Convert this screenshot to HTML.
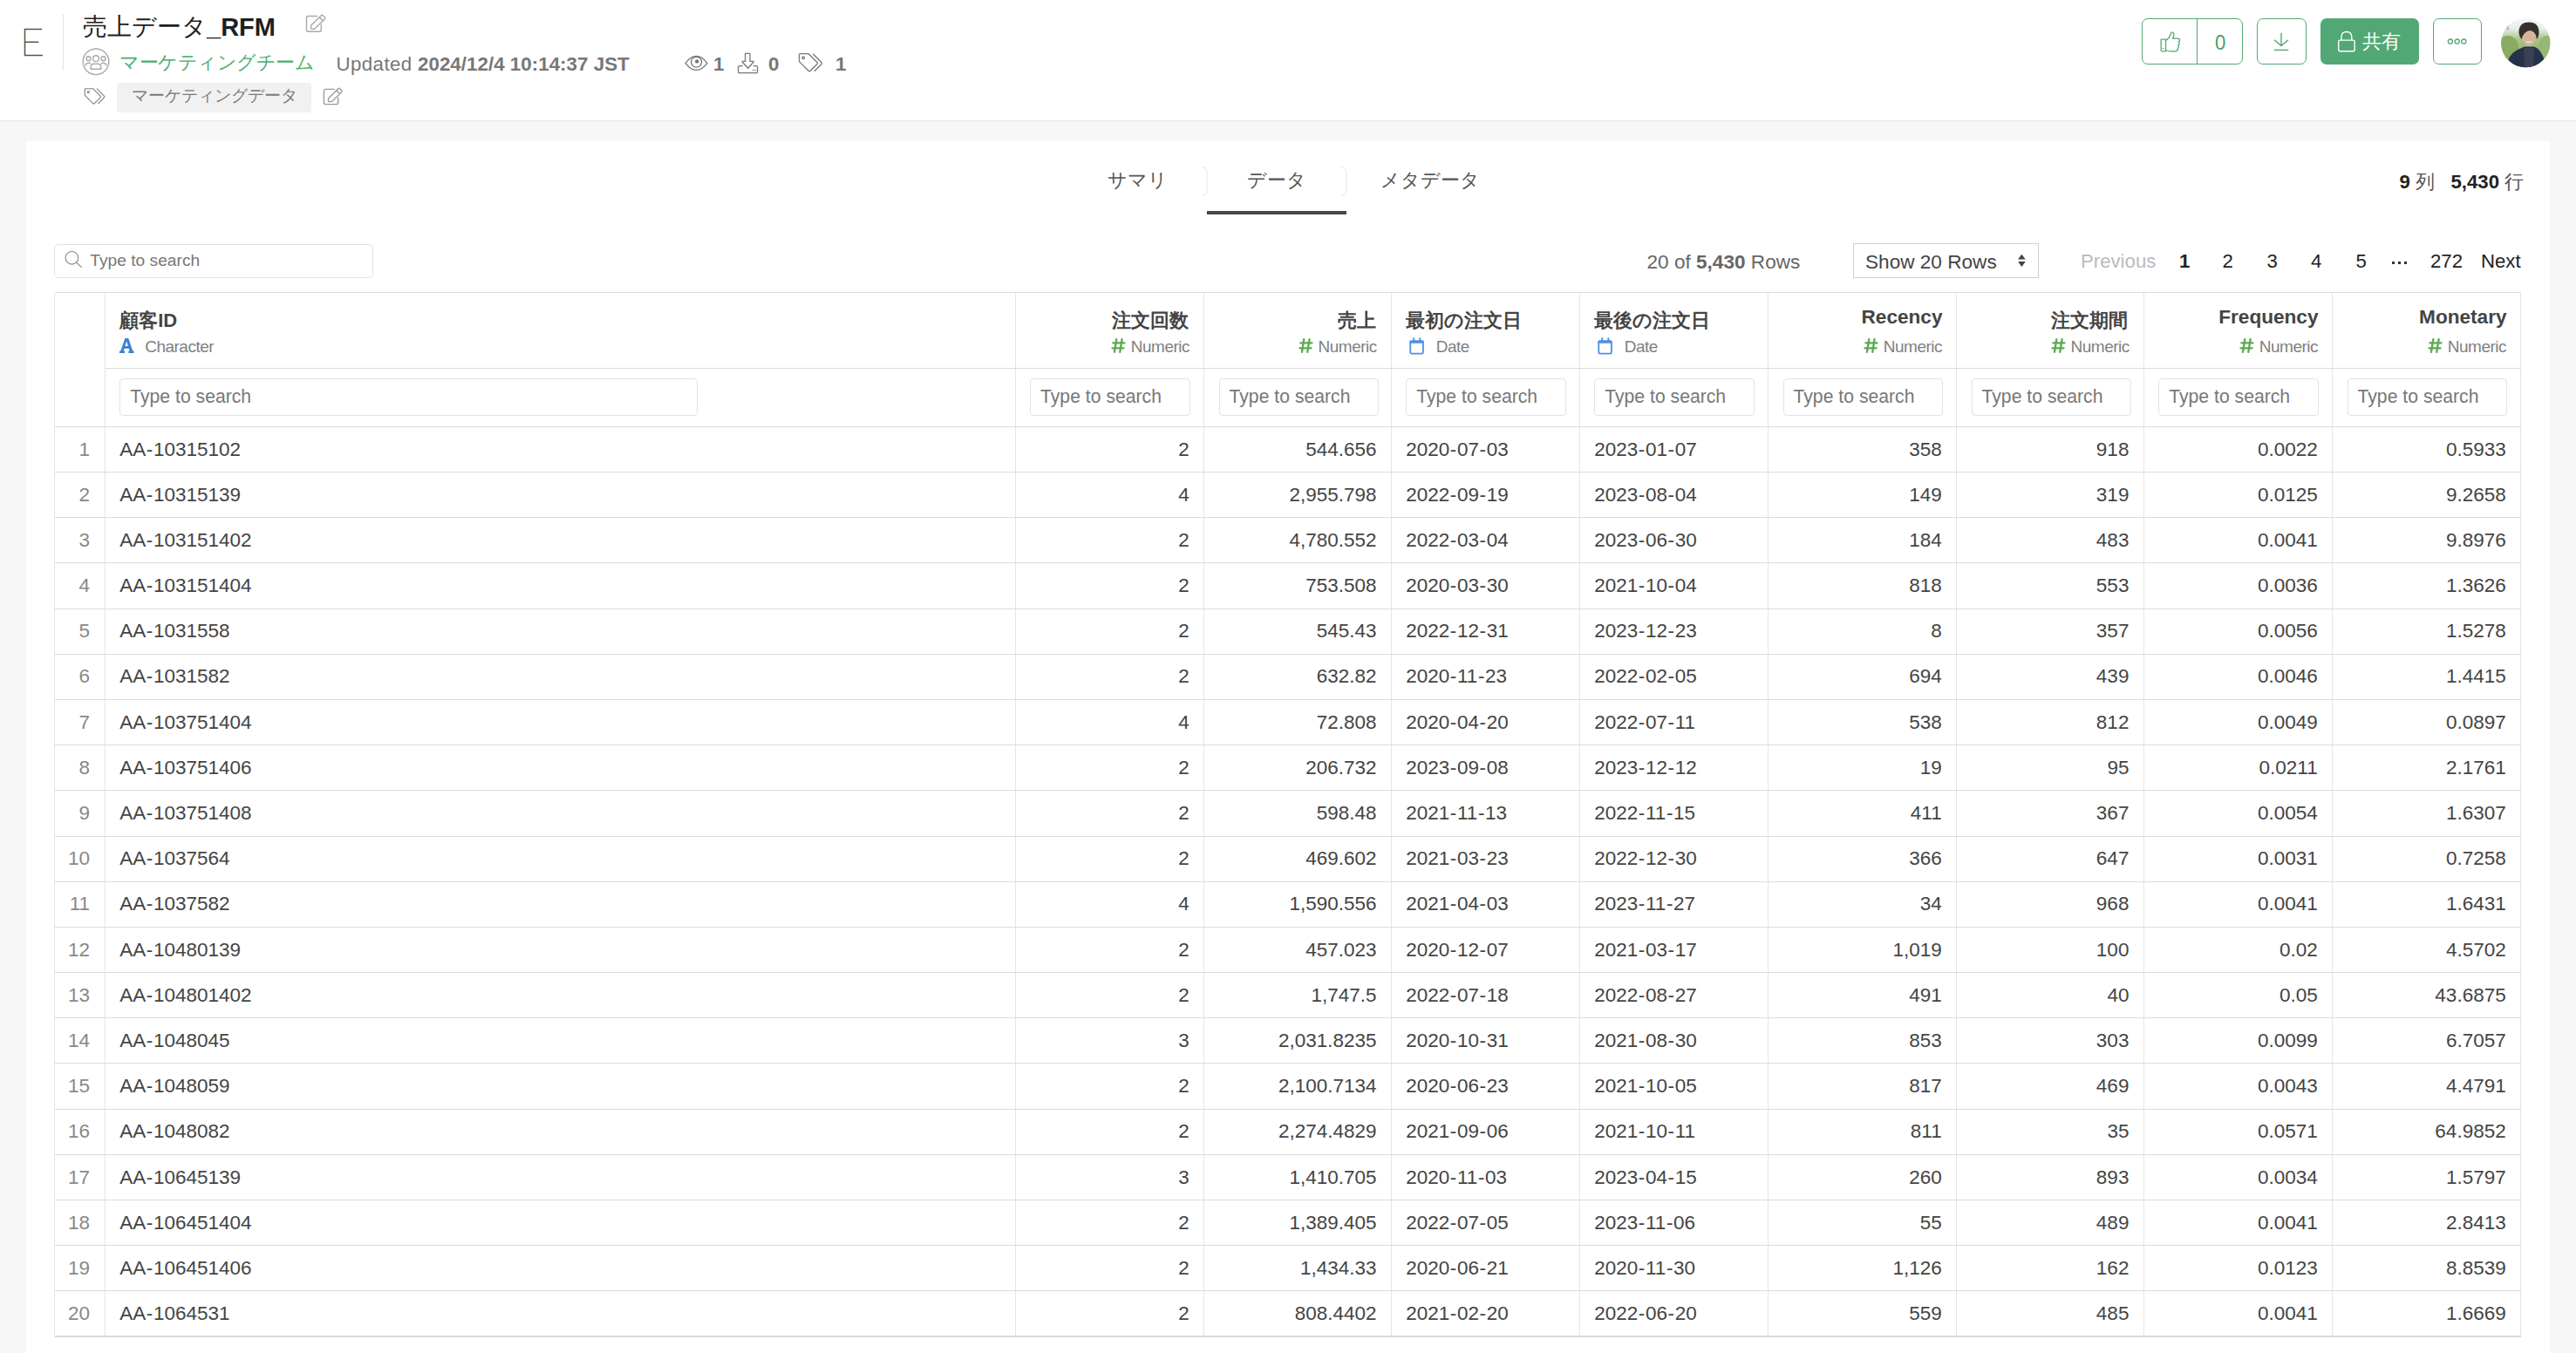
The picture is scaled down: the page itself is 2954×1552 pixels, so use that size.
<!DOCTYPE html><html><head><meta charset="utf-8"><style>
*{box-sizing:border-box;margin:0;padding:0}
html,body{width:2954px;height:1552px;overflow:hidden;background:#f7f7f7;font-family:"Liberation Sans",sans-serif;color:#444}
.a{position:absolute;white-space:pre;line-height:1}
svg{position:absolute;overflow:visible}
#hdr{position:absolute;left:0;top:0;width:2954px;height:139px;background:#fff;border-bottom:1px solid #e6e6e6}
#card{position:absolute;left:30px;top:162px;width:2894px;height:1400px;background:#fff}
.vl{position:absolute;width:1px;background:#e4e4e4}
.hl{position:absolute;height:1px;background:#dcdcdc}
.t{position:absolute;white-space:pre;font-size:22.5px;color:#444;line-height:1}
.r{text-align:right}
.inp{position:absolute;border:1px solid #e3e3e3;border-radius:4px;background:#fff}
.ph{position:absolute;font-size:21.2px;color:#777;white-space:pre;line-height:1}
.hd{position:absolute;font-size:22px;font-weight:bold;color:#444;white-space:pre;line-height:1}
.ty{position:absolute;font-size:19px;letter-spacing:-0.5px;color:#808080;white-space:pre;line-height:1}
.btn{position:absolute;border:1.3px solid #52a874;border-radius:7px;background:#fff}
</style></head><body>
<div id="hdr"></div>
<div id="card"></div>
<svg style="left:0;top:0" width="80" height="100"><path d="M48.2 33.6H28.5V63.4H49M28.5 48.3H44.2" fill="none" stroke="#56564a" stroke-width="1.5"/></svg>
<div class="vl" style="left:72px;top:16px;height:64px;background:#e2e2e2"></div>
<div class="a" style="left:95px;top:15.5px;font-size:27.5px;color:#1e1e1e">売上データ<span style="font-size:29px;font-weight:bold;position:relative;top:1.2px">_RFM</span></div>
<svg style="left:349.6px;top:16.4px" width="30" height="30" viewBox="0 0 30 30"><g transform="scale(1.0)" fill="none" stroke="#a8a8a8" stroke-width="1.4" stroke-linejoin="round"><path d="M14 2.5H3.5Q1.5 2.5 1.5 4.5V18.3Q1.5 20.2 3.5 20.2H16.3Q18.3 20.2 18.3 18.3V11.8"/><path d="M6.7 17V13.3L18.3 1.7Q19.3 0.7 20.3 1.7L22.4 3.8Q23.4 4.8 22.4 5.8L10.6 17.2Z"/><path d="M16.3 3.7L20.3 7.7"/></g></svg>
<svg style="left:94px;top:55px" width="32" height="32" viewBox="0 0 32 32"><g fill="none" stroke="#aaa" stroke-width="1.4"><circle cx="16" cy="15.8" r="14.8"/><circle cx="16" cy="12.2" r="3.4"/><circle cx="7.5" cy="12.2" r="2.5"/><circle cx="24.5" cy="12.2" r="2.5"/><path d="M10.2 24.3V21.5Q10.2 18.2 13.6 18.2H18.4Q21.8 18.2 21.8 21.5V24.3Z"/><path d="M3.8 20.2Q4.8 17.3 7.6 17.3Q9.2 17.3 9.8 18"/><path d="M28.2 20.2Q27.2 17.3 24.4 17.3Q22.8 17.3 22.2 18"/></g></svg>
<div class="a" style="left:137px;top:60.5px;font-size:22px;letter-spacing:-0.45px;color:#4cae6c">マーケティングチーム</div>
<div class="a" style="left:385.5px;top:63px;font-size:22.4px;color:#777;letter-spacing:0.35px">Updated</div>
<div class="a" style="left:479px;top:63px;font-size:22.4px;color:#777;font-weight:bold">2024/12/4 10:14:37 JST</div>
<svg style="left:784px;top:60px" width="30" height="24" viewBox="0 0 30 24"><g fill="none" stroke="#777" stroke-width="1.3"><path d="M2 12.3Q8 4.3 14.5 4.3Q21 4.3 27 12.3Q21 20.4 14.5 20.4Q8 20.4 2 12.3Z"/><circle cx="14.6" cy="11.1" r="6"/></g><circle cx="15.2" cy="10.4" r="2.2" fill="#777"/></svg>
<div class="a" style="left:818px;top:63px;font-size:22.4px;color:#777;font-weight:bold">1</div>
<svg style="left:845px;top:59px" width="26" height="28" viewBox="0 0 26 28"><g fill="none" stroke="#777" stroke-width="1.3" stroke-linejoin="round"><path d="M9.6 2.7Q9.6 2.4 10 2.4H14.5Q15 2.4 15 2.8V11.4H18.8Q19.6 11.6 19 12.3L12.8 19.2L6.3 12.3Q5.8 11.6 6.6 11.4H9.6Z"/><path d="M6.8 16.6H3Q1.6 16.6 1.6 18V23.4Q1.6 24.7 3 24.7H22.3Q23.6 24.7 23.6 23.4V18Q23.6 16.6 22.3 16.6H18.8"/></g><circle cx="18.6" cy="21.5" r="0.8" fill="#777"/><circle cx="21" cy="21.5" r="0.8" fill="#777"/></svg>
<div class="a" style="left:881px;top:63px;font-size:22.4px;color:#777;font-weight:bold">0</div>
<svg style="left:915px;top:59.8px" width="30" height="26" viewBox="0 0 30 26"><g fill="none" stroke="#777" stroke-width="1.3" stroke-linejoin="round"><path d="M1.5 3Q1.5 1.7 2.8 1.7H12.2L22 11.5Q23 12.5 22 13.5L14.2 21.3Q13.2 22.3 12.2 21.3L1.5 10.6Z"/><path d="M17.2 1.7L27 11.5Q28 12.5 27 13.5L18.8 21.7"/><circle cx="6.2" cy="6.2" r="1.3"/></g></svg>
<div class="a" style="left:958px;top:63px;font-size:22.4px;color:#777;font-weight:bold">1</div>
<svg style="left:96px;top:99.5px" width="26" height="23" viewBox="0 0 30 26" style="left:96px;top:99.5px;width:25px;height:21.5px"><g fill="none" stroke="#808080" stroke-width="1.3" stroke-linejoin="round"><path d="M1.5 3Q1.5 1.7 2.8 1.7H12.2L22 11.5Q23 12.5 22 13.5L14.2 21.3Q13.2 22.3 12.2 21.3L1.5 10.6Z"/><path d="M17.2 1.7L27 11.5Q28 12.5 27 13.5L18.8 21.7"/><circle cx="6.2" cy="6.2" r="1.3"/></g></svg>
<div style="position:absolute;left:134px;top:95px;width:223px;height:34px;background:#f1f1f1;border-radius:3px"></div>
<div class="a" style="left:151px;top:100px;font-size:19px;color:#7a7a7a">マーケティングデータ</div>
<svg style="left:369.5px;top:100.4px" width="30" height="30" viewBox="0 0 30 30"><g transform="scale(0.97)" fill="none" stroke="#9a9a9a" stroke-width="1.4" stroke-linejoin="round"><path d="M14 2.5H3.5Q1.5 2.5 1.5 4.5V18.3Q1.5 20.2 3.5 20.2H16.3Q18.3 20.2 18.3 18.3V11.8"/><path d="M6.7 17V13.3L18.3 1.7Q19.3 0.7 20.3 1.7L22.4 3.8Q23.4 4.8 22.4 5.8L10.6 17.2Z"/><path d="M16.3 3.7L20.3 7.7"/></g></svg>
<div class="btn" style="left:2456px;top:21px;width:116px;height:52.7px"></div>
<div style="position:absolute;left:2518.8px;top:21px;width:1.3px;height:52.7px;background:#52a874"></div>
<svg style="left:2476px;top:35px" width="28" height="28" viewBox="0 0 28 28"><g fill="none" stroke="#52a874" stroke-width="1.3" stroke-linejoin="round"><path d="M2.2 10.2H7.5V23.8H3.2Q2.2 23.8 2.2 22.8Z"/><path d="M7.5 11.3Q9 10.8 10.8 8.5Q12.7 5.9 13.3 3.6Q13.8 1.6 15.6 2.2Q17.2 2.9 16.9 5.6Q16.6 7.8 15.4 9.1H21.5Q23.7 9.3 23.6 11.3Q23.5 12.7 22.2 13.2Q23.3 13.8 23.1 15.3Q22.9 16.5 21.8 16.9Q22.5 17.7 22.3 18.9Q22.1 20.1 21 20.5Q21.4 21.3 21.1 22.3Q20.6 23.8 18.5 23.8H13.5Q10.5 23.8 7.5 22.5"/></g><circle cx="4.6" cy="20.8" r="0.8" fill="#52a874"/></svg>
<div class="a" style="left:2539.5px;top:36.5px;font-size:24px;color:#4a9f6a;transform:scaleX(0.92);transform-origin:left">0</div>
<div class="btn" style="left:2588px;top:21px;width:57px;height:52.7px"></div>
<svg style="left:2606px;top:36px" width="20" height="24" viewBox="0 0 20 24"><g fill="none" stroke="#52a874" stroke-width="1.4"><path d="M10 1.8V16.2M2 9.8L10 16.5L18 9.8"/><path d="M1.8 21.4H18.2"/></g></svg>
<div style="position:absolute;left:2661px;top:21px;width:113px;height:52.7px;background:#52a874;border-radius:7px"></div>
<svg style="left:2679px;top:35px" width="24" height="26" viewBox="0 0 24 26"><g fill="none" stroke="#fff" stroke-width="1.4"><path d="M6 11.2V7.3Q6 1.5 11.9 1.5Q17.8 1.5 17.8 7.3V11.2"/><rect x="2.7" y="11.1" width="18.5" height="12.7" rx="2"/></g></svg>
<div class="a" style="left:2709px;top:38px;font-size:21.5px;color:#fff">共有</div>
<div class="btn" style="left:2790px;top:21px;width:56px;height:52.7px"></div>
<svg style="left:2800px;top:40px" width="36" height="16" viewBox="0 0 36 16"><g fill="none" stroke="#52a874" stroke-width="1.3"><circle cx="9.9" cy="7.6" r="2.6"/><circle cx="17.7" cy="7.6" r="2.6"/><circle cx="25.3" cy="7.6" r="2.6"/></g></svg>
<svg style="left:2867.5px;top:20.5px" width="57" height="57" viewBox="0 0 57 57"><defs><clipPath id="cp"><circle cx="28.3" cy="28.2" r="28.1"/></clipPath>
<linearGradient id="bg" x1="0" y1="0" x2="0" y2="1"><stop offset="0" stop-color="#f4f6f8"/><stop offset="0.22" stop-color="#e6ece6"/><stop offset="0.42" stop-color="#a9c486"/><stop offset="1" stop-color="#7aa25a"/></linearGradient></defs>
<g clip-path="url(#cp)"><rect width="57" height="57" fill="url(#bg)"/>
<ellipse cx="8" cy="34" rx="12" ry="14" fill="#86ab62"/><ellipse cx="52" cy="33" rx="9" ry="13" fill="#95b872"/><path d="M4 12L7 4L10 14Z" fill="#b9c7b0"/>
<path d="M6 57Q8 41 19 36L27 32.5H38Q48 36 52 57Z" fill="#26324a"/>
<path d="M26 34L38 34L37 57L27 57Z" fill="#3b4152"/>
<ellipse cx="32" cy="23" rx="7.3" ry="9" fill="#d6b39a"/>
<path d="M20.5 17Q20 4.5 32 4.5Q44 4.5 43.5 17Q43 22 41 24Q40 15 33 14Q26 15 23.5 24Q21 21 20.5 17Z" fill="#35302e"/>
<path d="M28.5 26.5Q32 28.5 35.5 26.5" stroke="#f4eee8" stroke-width="1.3" fill="none"/></g></svg>
<div class="a" style="left:1270.0px;top:196px;font-size:22px;color:#555">サマリ</div>
<div class="a" style="left:1430.0px;top:196px;font-size:22px;color:#555">データ</div>
<div class="a" style="left:1583.0px;top:196px;font-size:22px;color:#555">メタデータ</div>
<svg style="left:1375.5px;top:188px" width="12" height="40" viewBox="0 0 12 40"><path d="M2.5 3.8Q8 4 8 10V30Q8 36 2.5 36.2" fill="none" stroke="#e6e6e6" stroke-width="1"/></svg>
<svg style="left:1535.5px;top:188px" width="12" height="40" viewBox="0 0 12 40"><path d="M2.5 3.8Q8 4 8 10V30Q8 36 2.5 36.2" fill="none" stroke="#e6e6e6" stroke-width="1"/></svg>
<div style="position:absolute;left:1384px;top:241.5px;width:160px;height:4.5px;background:#484848"></div>
<div class="a" style="left:2751.5px;top:197.5px;font-size:22.2px;color:#222"><b>9</b> <span style="color:#555">列</span>&nbsp;&nbsp; <b>5,430</b> <span style="color:#555">行</span></div>
<div class="inp" style="left:62px;top:280px;width:365.5px;height:38.5px;border-color:#e0e0e0;border-radius:5px"></div>
<svg style="left:72px;top:285px" width="26" height="26" viewBox="0 0 26 26"><g fill="none" stroke="#888" stroke-width="1.1"><circle cx="10.4" cy="10.8" r="7.3"/><path d="M15.6 16L21.8 21.8"/></g></svg>
<div class="a" style="left:103.3px;top:288.6px;font-size:19.2px;color:#777">Type to search</div>
<div class="a" style="left:1888.5px;top:289.5px;font-size:22.6px;color:#666">20 of <b>5,430</b> Rows</div>
<div style="position:absolute;left:2125px;top:279px;width:212.5px;height:39.5px;border:1px solid #cfcfcf;background:#fff"></div>
<div class="a" style="left:2139px;top:289.5px;font-size:22.6px;color:#444">Show 20 Rows</div>
<svg style="left:2310px;top:288px" width="16" height="22" viewBox="0 0 16 22"><path d="M4.1 9.6L8.4 3.7L12.7 9.6Z M4.1 12.1L12.7 12.1L8.4 18Z" fill="#444"/></svg>
<div class="a" style="left:2386px;top:289px;font-size:22.2px;color:#bbb">Previous</div>
<div class="a" style="left:2499px;top:289px;font-size:22.2px;color:#222;font-weight:bold;">1</div>
<div class="a" style="left:2548.5px;top:289px;font-size:22.2px;color:#222;">2</div>
<div class="a" style="left:2599.5px;top:289px;font-size:22.2px;color:#222;">3</div>
<div class="a" style="left:2650px;top:289px;font-size:22.2px;color:#222;">4</div>
<div class="a" style="left:2701.5px;top:289px;font-size:22.2px;color:#222;">5</div>
<div class="a" style="left:2787px;top:289px;font-size:22.2px;color:#222;">272</div>
<div class="a" style="left:2845px;top:289px;font-size:22.2px;color:#222;">Next</div>
<div style="position:absolute;left:2743px;top:300px;width:3px;height:3px;background:#333"></div>
<div style="position:absolute;left:2750px;top:300px;width:3px;height:3px;background:#333"></div>
<div style="position:absolute;left:2757.2px;top:300px;width:3px;height:3px;background:#333"></div>
<div class="vl" style="left:62.00px;top:335.5px;height:1197.60px"></div>
<div class="vl" style="left:119.75px;top:335.5px;height:1197.60px"></div>
<div class="vl" style="left:1163.50px;top:335.5px;height:1197.60px"></div>
<div class="vl" style="left:1380.00px;top:335.5px;height:1197.60px"></div>
<div class="vl" style="left:1594.75px;top:335.5px;height:1197.60px"></div>
<div class="vl" style="left:1810.75px;top:335.5px;height:1197.60px"></div>
<div class="vl" style="left:2027.00px;top:335.5px;height:1197.60px"></div>
<div class="vl" style="left:2243.00px;top:335.5px;height:1197.60px"></div>
<div class="vl" style="left:2457.75px;top:335.5px;height:1197.60px"></div>
<div class="vl" style="left:2674.00px;top:335.5px;height:1197.60px"></div>
<div class="vl" style="left:2890.00px;top:335.5px;height:1197.60px"></div>
<div class="hl" style="left:62.5px;top:335.0px;width:2828.00px"></div>
<div class="hl" style="left:120.25px;top:421.9px;width:2770.25px"></div>
<div class="hl" style="left:62.5px;top:488.80px;width:2828.00px;"></div>
<div class="hl" style="left:62.5px;top:540.99px;width:2828.00px;"></div>
<div class="hl" style="left:62.5px;top:593.18px;width:2828.00px;"></div>
<div class="hl" style="left:62.5px;top:645.37px;width:2828.00px;"></div>
<div class="hl" style="left:62.5px;top:697.56px;width:2828.00px;"></div>
<div class="hl" style="left:62.5px;top:749.75px;width:2828.00px;"></div>
<div class="hl" style="left:62.5px;top:801.94px;width:2828.00px;"></div>
<div class="hl" style="left:62.5px;top:854.13px;width:2828.00px;"></div>
<div class="hl" style="left:62.5px;top:906.32px;width:2828.00px;"></div>
<div class="hl" style="left:62.5px;top:958.51px;width:2828.00px;"></div>
<div class="hl" style="left:62.5px;top:1010.70px;width:2828.00px;"></div>
<div class="hl" style="left:62.5px;top:1062.89px;width:2828.00px;"></div>
<div class="hl" style="left:62.5px;top:1115.08px;width:2828.00px;"></div>
<div class="hl" style="left:62.5px;top:1167.27px;width:2828.00px;"></div>
<div class="hl" style="left:62.5px;top:1219.46px;width:2828.00px;"></div>
<div class="hl" style="left:62.5px;top:1271.65px;width:2828.00px;"></div>
<div class="hl" style="left:62.5px;top:1323.84px;width:2828.00px;"></div>
<div class="hl" style="left:62.5px;top:1376.03px;width:2828.00px;"></div>
<div class="hl" style="left:62.5px;top:1428.22px;width:2828.00px;"></div>
<div class="hl" style="left:62.5px;top:1480.41px;width:2828.00px;"></div>
<div class="hl" style="left:62.5px;top:1532.60px;width:2828.00px;height:2px;background:#d9d9d9;top:1532px"></div>
<div class="hd" style="left:137.2px;top:356.5px;">顧客ID</div>
<svg style="left:136.2px;top:386px" width="20" height="21" viewBox="0 0 20 21"><path d="M7.4 2.1H11.3L16.2 16.5H17.6V19.1H11.4V16.5H12.6L11.7 13.8H6.6L5.7 16.5H7V19.1H1V16.5H2.3Z M7.4 11H10.9L9.15 5.6Z" fill="#3a84d0"/></svg>
<div class="ty" style="left:166.2px;top:388px">Character</div>
<div class="inp" style="left:137.2px;top:434px;width:663px;height:42.5px"></div>
<div class="ph" style="left:149.2px;top:443.5px">Type to search</div>
<div class="hd r" style="right:1591.3px;top:356.5px;">注文回数</div>
<div class="ty r" style="right:1590.0px;top:388px">Numeric</div>
<svg style="left:1274.2px;top:386.5px" width="18" height="19" viewBox="0 0 18 19"><g stroke="#5aab4f" stroke-width="2.3" stroke-linecap="round"><path d="M6.3 2.2L4 16.8M12.6 2.2L10.3 16.8M2.4 6.4H15.5M1.5 12.3H14.6"/></g></svg>
<div class="inp" style="left:1181.0px;top:434px;width:183.5px;height:42.5px"></div>
<div class="ph" style="left:1193.0px;top:443.5px">Type to search</div>
<div class="hd r" style="right:1376.5px;top:356.5px;">売上</div>
<div class="ty r" style="right:1375.2px;top:388px">Numeric</div>
<svg style="left:1489.0px;top:386.5px" width="18" height="19" viewBox="0 0 18 19"><g stroke="#5aab4f" stroke-width="2.3" stroke-linecap="round"><path d="M6.3 2.2L4 16.8M12.6 2.2L10.3 16.8M2.4 6.4H15.5M1.5 12.3H14.6"/></g></svg>
<div class="inp" style="left:1397.5px;top:434px;width:183.5px;height:42.5px"></div>
<div class="ph" style="left:1409.5px;top:443.5px">Type to search</div>
<div class="hd" style="left:1612.2px;top:356.5px;">最初の注文日</div>
<svg style="left:1616.2px;top:386.5px" width="18" height="20" viewBox="0 0 18 20"><g fill="none" stroke="#4a8fe6" stroke-width="1.8"><rect x="1.3" y="4.3" width="14.6" height="14.4" rx="1.6"/></g><rect x="0.5" y="3.5" width="16.2" height="3.2" rx="1" fill="#4a8fe6"/><rect x="4.3" y="0.4" width="1.9" height="4" fill="#4a8fe6"/><rect x="11.4" y="0.4" width="1.9" height="4" fill="#4a8fe6"/></svg>
<div class="ty" style="left:1646.8px;top:388px">Date</div>
<div class="inp" style="left:1612.2px;top:434px;width:183.5px;height:42.5px"></div>
<div class="ph" style="left:1624.2px;top:443.5px">Type to search</div>
<div class="hd" style="left:1828.2px;top:356.5px;">最後の注文日</div>
<svg style="left:1832.2px;top:386.5px" width="18" height="20" viewBox="0 0 18 20"><g fill="none" stroke="#4a8fe6" stroke-width="1.8"><rect x="1.3" y="4.3" width="14.6" height="14.4" rx="1.6"/></g><rect x="0.5" y="3.5" width="16.2" height="3.2" rx="1" fill="#4a8fe6"/><rect x="4.3" y="0.4" width="1.9" height="4" fill="#4a8fe6"/><rect x="11.4" y="0.4" width="1.9" height="4" fill="#4a8fe6"/></svg>
<div class="ty" style="left:1862.8px;top:388px">Date</div>
<div class="inp" style="left:1828.2px;top:434px;width:183.5px;height:42.5px"></div>
<div class="ph" style="left:1840.2px;top:443.5px">Type to search</div>
<div class="hd r" style="right:726.5px;top:353.3px;font-size:22.6px;">Recency</div>
<div class="ty r" style="right:727.0px;top:388px">Numeric</div>
<svg style="left:2137.2px;top:386.5px" width="18" height="19" viewBox="0 0 18 19"><g stroke="#5aab4f" stroke-width="2.3" stroke-linecap="round"><path d="M6.3 2.2L4 16.8M12.6 2.2L10.3 16.8M2.4 6.4H15.5M1.5 12.3H14.6"/></g></svg>
<div class="inp" style="left:2044.5px;top:434px;width:183.5px;height:42.5px"></div>
<div class="ph" style="left:2056.5px;top:443.5px">Type to search</div>
<div class="hd r" style="right:513.6px;top:356.5px;">注文期間</div>
<div class="ty r" style="right:512.2px;top:388px">Numeric</div>
<svg style="left:2351.9px;top:386.5px" width="18" height="19" viewBox="0 0 18 19"><g stroke="#5aab4f" stroke-width="2.3" stroke-linecap="round"><path d="M6.3 2.2L4 16.8M12.6 2.2L10.3 16.8M2.4 6.4H15.5M1.5 12.3H14.6"/></g></svg>
<div class="inp" style="left:2260.5px;top:434px;width:183.5px;height:42.5px"></div>
<div class="ph" style="left:2272.5px;top:443.5px">Type to search</div>
<div class="hd r" style="right:295.5px;top:353.3px;font-size:22.6px;">Frequency</div>
<div class="ty r" style="right:296.0px;top:388px">Numeric</div>
<svg style="left:2568.2px;top:386.5px" width="18" height="19" viewBox="0 0 18 19"><g stroke="#5aab4f" stroke-width="2.3" stroke-linecap="round"><path d="M6.3 2.2L4 16.8M12.6 2.2L10.3 16.8M2.4 6.4H15.5M1.5 12.3H14.6"/></g></svg>
<div class="inp" style="left:2475.2px;top:434px;width:183.5px;height:42.5px"></div>
<div class="ph" style="left:2487.2px;top:443.5px">Type to search</div>
<div class="hd r" style="right:79.5px;top:353.3px;font-size:22.6px;">Monetary</div>
<div class="ty r" style="right:80.0px;top:388px">Numeric</div>
<svg style="left:2784.2px;top:386.5px" width="18" height="19" viewBox="0 0 18 19"><g stroke="#5aab4f" stroke-width="2.3" stroke-linecap="round"><path d="M6.3 2.2L4 16.8M12.6 2.2L10.3 16.8M2.4 6.4H15.5M1.5 12.3H14.6"/></g></svg>
<div class="inp" style="left:2691.5px;top:434px;width:183.5px;height:42.5px"></div>
<div class="ph" style="left:2703.5px;top:443.5px">Type to search</div>
<div class="t r" style="right:2851.0px;top:504.50px;color:#888">1</div>
<div class="t" style="left:137.2px;top:504.50px">AA<span style="padding:0 0.6px">-</span>10315102</div>
<div class="t r" style="right:1590.3px;top:504.50px">2</div>
<div class="t r" style="right:1375.5px;top:504.50px">544.656</div>
<div class="t" style="left:1612.2px;top:504.50px">2020<span style="padding:0 0.6px">-</span>07<span style="padding:0 0.6px">-</span>03</div>
<div class="t" style="left:1828.2px;top:504.50px">2023<span style="padding:0 0.6px">-</span>01<span style="padding:0 0.6px">-</span>07</div>
<div class="t r" style="right:727.3px;top:504.50px">358</div>
<div class="t r" style="right:512.6px;top:504.50px">918</div>
<div class="t r" style="right:296.3px;top:504.50px">0.0022</div>
<div class="t r" style="right:80.3px;top:504.50px">0.5933</div>
<div class="t r" style="right:2851.0px;top:556.69px;color:#888">2</div>
<div class="t" style="left:137.2px;top:556.69px">AA<span style="padding:0 0.6px">-</span>10315139</div>
<div class="t r" style="right:1590.3px;top:556.69px">4</div>
<div class="t r" style="right:1375.5px;top:556.69px">2,955.798</div>
<div class="t" style="left:1612.2px;top:556.69px">2022<span style="padding:0 0.6px">-</span>09<span style="padding:0 0.6px">-</span>19</div>
<div class="t" style="left:1828.2px;top:556.69px">2023<span style="padding:0 0.6px">-</span>08<span style="padding:0 0.6px">-</span>04</div>
<div class="t r" style="right:727.3px;top:556.69px">149</div>
<div class="t r" style="right:512.6px;top:556.69px">319</div>
<div class="t r" style="right:296.3px;top:556.69px">0.0125</div>
<div class="t r" style="right:80.3px;top:556.69px">9.2658</div>
<div class="t r" style="right:2851.0px;top:608.88px;color:#888">3</div>
<div class="t" style="left:137.2px;top:608.88px">AA<span style="padding:0 0.6px">-</span>103151402</div>
<div class="t r" style="right:1590.3px;top:608.88px">2</div>
<div class="t r" style="right:1375.5px;top:608.88px">4,780.552</div>
<div class="t" style="left:1612.2px;top:608.88px">2022<span style="padding:0 0.6px">-</span>03<span style="padding:0 0.6px">-</span>04</div>
<div class="t" style="left:1828.2px;top:608.88px">2023<span style="padding:0 0.6px">-</span>06<span style="padding:0 0.6px">-</span>30</div>
<div class="t r" style="right:727.3px;top:608.88px">184</div>
<div class="t r" style="right:512.6px;top:608.88px">483</div>
<div class="t r" style="right:296.3px;top:608.88px">0.0041</div>
<div class="t r" style="right:80.3px;top:608.88px">9.8976</div>
<div class="t r" style="right:2851.0px;top:661.07px;color:#888">4</div>
<div class="t" style="left:137.2px;top:661.07px">AA<span style="padding:0 0.6px">-</span>103151404</div>
<div class="t r" style="right:1590.3px;top:661.07px">2</div>
<div class="t r" style="right:1375.5px;top:661.07px">753.508</div>
<div class="t" style="left:1612.2px;top:661.07px">2020<span style="padding:0 0.6px">-</span>03<span style="padding:0 0.6px">-</span>30</div>
<div class="t" style="left:1828.2px;top:661.07px">2021<span style="padding:0 0.6px">-</span>10<span style="padding:0 0.6px">-</span>04</div>
<div class="t r" style="right:727.3px;top:661.07px">818</div>
<div class="t r" style="right:512.6px;top:661.07px">553</div>
<div class="t r" style="right:296.3px;top:661.07px">0.0036</div>
<div class="t r" style="right:80.3px;top:661.07px">1.3626</div>
<div class="t r" style="right:2851.0px;top:713.26px;color:#888">5</div>
<div class="t" style="left:137.2px;top:713.26px">AA<span style="padding:0 0.6px">-</span>1031558</div>
<div class="t r" style="right:1590.3px;top:713.26px">2</div>
<div class="t r" style="right:1375.5px;top:713.26px">545.43</div>
<div class="t" style="left:1612.2px;top:713.26px">2022<span style="padding:0 0.6px">-</span>12<span style="padding:0 0.6px">-</span>31</div>
<div class="t" style="left:1828.2px;top:713.26px">2023<span style="padding:0 0.6px">-</span>12<span style="padding:0 0.6px">-</span>23</div>
<div class="t r" style="right:727.3px;top:713.26px">8</div>
<div class="t r" style="right:512.6px;top:713.26px">357</div>
<div class="t r" style="right:296.3px;top:713.26px">0.0056</div>
<div class="t r" style="right:80.3px;top:713.26px">1.5278</div>
<div class="t r" style="right:2851.0px;top:765.45px;color:#888">6</div>
<div class="t" style="left:137.2px;top:765.45px">AA<span style="padding:0 0.6px">-</span>1031582</div>
<div class="t r" style="right:1590.3px;top:765.45px">2</div>
<div class="t r" style="right:1375.5px;top:765.45px">632.82</div>
<div class="t" style="left:1612.2px;top:765.45px">2020<span style="padding:0 0.6px">-</span>11<span style="padding:0 0.6px">-</span>23</div>
<div class="t" style="left:1828.2px;top:765.45px">2022<span style="padding:0 0.6px">-</span>02<span style="padding:0 0.6px">-</span>05</div>
<div class="t r" style="right:727.3px;top:765.45px">694</div>
<div class="t r" style="right:512.6px;top:765.45px">439</div>
<div class="t r" style="right:296.3px;top:765.45px">0.0046</div>
<div class="t r" style="right:80.3px;top:765.45px">1.4415</div>
<div class="t r" style="right:2851.0px;top:817.64px;color:#888">7</div>
<div class="t" style="left:137.2px;top:817.64px">AA<span style="padding:0 0.6px">-</span>103751404</div>
<div class="t r" style="right:1590.3px;top:817.64px">4</div>
<div class="t r" style="right:1375.5px;top:817.64px">72.808</div>
<div class="t" style="left:1612.2px;top:817.64px">2020<span style="padding:0 0.6px">-</span>04<span style="padding:0 0.6px">-</span>20</div>
<div class="t" style="left:1828.2px;top:817.64px">2022<span style="padding:0 0.6px">-</span>07<span style="padding:0 0.6px">-</span>11</div>
<div class="t r" style="right:727.3px;top:817.64px">538</div>
<div class="t r" style="right:512.6px;top:817.64px">812</div>
<div class="t r" style="right:296.3px;top:817.64px">0.0049</div>
<div class="t r" style="right:80.3px;top:817.64px">0.0897</div>
<div class="t r" style="right:2851.0px;top:869.83px;color:#888">8</div>
<div class="t" style="left:137.2px;top:869.83px">AA<span style="padding:0 0.6px">-</span>103751406</div>
<div class="t r" style="right:1590.3px;top:869.83px">2</div>
<div class="t r" style="right:1375.5px;top:869.83px">206.732</div>
<div class="t" style="left:1612.2px;top:869.83px">2023<span style="padding:0 0.6px">-</span>09<span style="padding:0 0.6px">-</span>08</div>
<div class="t" style="left:1828.2px;top:869.83px">2023<span style="padding:0 0.6px">-</span>12<span style="padding:0 0.6px">-</span>12</div>
<div class="t r" style="right:727.3px;top:869.83px">19</div>
<div class="t r" style="right:512.6px;top:869.83px">95</div>
<div class="t r" style="right:296.3px;top:869.83px">0.0211</div>
<div class="t r" style="right:80.3px;top:869.83px">2.1761</div>
<div class="t r" style="right:2851.0px;top:922.02px;color:#888">9</div>
<div class="t" style="left:137.2px;top:922.02px">AA<span style="padding:0 0.6px">-</span>103751408</div>
<div class="t r" style="right:1590.3px;top:922.02px">2</div>
<div class="t r" style="right:1375.5px;top:922.02px">598.48</div>
<div class="t" style="left:1612.2px;top:922.02px">2021<span style="padding:0 0.6px">-</span>11<span style="padding:0 0.6px">-</span>13</div>
<div class="t" style="left:1828.2px;top:922.02px">2022<span style="padding:0 0.6px">-</span>11<span style="padding:0 0.6px">-</span>15</div>
<div class="t r" style="right:727.3px;top:922.02px">411</div>
<div class="t r" style="right:512.6px;top:922.02px">367</div>
<div class="t r" style="right:296.3px;top:922.02px">0.0054</div>
<div class="t r" style="right:80.3px;top:922.02px">1.6307</div>
<div class="t r" style="right:2851.0px;top:974.21px;color:#888">10</div>
<div class="t" style="left:137.2px;top:974.21px">AA<span style="padding:0 0.6px">-</span>1037564</div>
<div class="t r" style="right:1590.3px;top:974.21px">2</div>
<div class="t r" style="right:1375.5px;top:974.21px">469.602</div>
<div class="t" style="left:1612.2px;top:974.21px">2021<span style="padding:0 0.6px">-</span>03<span style="padding:0 0.6px">-</span>23</div>
<div class="t" style="left:1828.2px;top:974.21px">2022<span style="padding:0 0.6px">-</span>12<span style="padding:0 0.6px">-</span>30</div>
<div class="t r" style="right:727.3px;top:974.21px">366</div>
<div class="t r" style="right:512.6px;top:974.21px">647</div>
<div class="t r" style="right:296.3px;top:974.21px">0.0031</div>
<div class="t r" style="right:80.3px;top:974.21px">0.7258</div>
<div class="t r" style="right:2851.0px;top:1026.40px;color:#888">11</div>
<div class="t" style="left:137.2px;top:1026.40px">AA<span style="padding:0 0.6px">-</span>1037582</div>
<div class="t r" style="right:1590.3px;top:1026.40px">4</div>
<div class="t r" style="right:1375.5px;top:1026.40px">1,590.556</div>
<div class="t" style="left:1612.2px;top:1026.40px">2021<span style="padding:0 0.6px">-</span>04<span style="padding:0 0.6px">-</span>03</div>
<div class="t" style="left:1828.2px;top:1026.40px">2023<span style="padding:0 0.6px">-</span>11<span style="padding:0 0.6px">-</span>27</div>
<div class="t r" style="right:727.3px;top:1026.40px">34</div>
<div class="t r" style="right:512.6px;top:1026.40px">968</div>
<div class="t r" style="right:296.3px;top:1026.40px">0.0041</div>
<div class="t r" style="right:80.3px;top:1026.40px">1.6431</div>
<div class="t r" style="right:2851.0px;top:1078.59px;color:#888">12</div>
<div class="t" style="left:137.2px;top:1078.59px">AA<span style="padding:0 0.6px">-</span>10480139</div>
<div class="t r" style="right:1590.3px;top:1078.59px">2</div>
<div class="t r" style="right:1375.5px;top:1078.59px">457.023</div>
<div class="t" style="left:1612.2px;top:1078.59px">2020<span style="padding:0 0.6px">-</span>12<span style="padding:0 0.6px">-</span>07</div>
<div class="t" style="left:1828.2px;top:1078.59px">2021<span style="padding:0 0.6px">-</span>03<span style="padding:0 0.6px">-</span>17</div>
<div class="t r" style="right:727.3px;top:1078.59px">1,019</div>
<div class="t r" style="right:512.6px;top:1078.59px">100</div>
<div class="t r" style="right:296.3px;top:1078.59px">0.02</div>
<div class="t r" style="right:80.3px;top:1078.59px">4.5702</div>
<div class="t r" style="right:2851.0px;top:1130.78px;color:#888">13</div>
<div class="t" style="left:137.2px;top:1130.78px">AA<span style="padding:0 0.6px">-</span>104801402</div>
<div class="t r" style="right:1590.3px;top:1130.78px">2</div>
<div class="t r" style="right:1375.5px;top:1130.78px">1,747.5</div>
<div class="t" style="left:1612.2px;top:1130.78px">2022<span style="padding:0 0.6px">-</span>07<span style="padding:0 0.6px">-</span>18</div>
<div class="t" style="left:1828.2px;top:1130.78px">2022<span style="padding:0 0.6px">-</span>08<span style="padding:0 0.6px">-</span>27</div>
<div class="t r" style="right:727.3px;top:1130.78px">491</div>
<div class="t r" style="right:512.6px;top:1130.78px">40</div>
<div class="t r" style="right:296.3px;top:1130.78px">0.05</div>
<div class="t r" style="right:80.3px;top:1130.78px">43.6875</div>
<div class="t r" style="right:2851.0px;top:1182.97px;color:#888">14</div>
<div class="t" style="left:137.2px;top:1182.97px">AA<span style="padding:0 0.6px">-</span>1048045</div>
<div class="t r" style="right:1590.3px;top:1182.97px">3</div>
<div class="t r" style="right:1375.5px;top:1182.97px">2,031.8235</div>
<div class="t" style="left:1612.2px;top:1182.97px">2020<span style="padding:0 0.6px">-</span>10<span style="padding:0 0.6px">-</span>31</div>
<div class="t" style="left:1828.2px;top:1182.97px">2021<span style="padding:0 0.6px">-</span>08<span style="padding:0 0.6px">-</span>30</div>
<div class="t r" style="right:727.3px;top:1182.97px">853</div>
<div class="t r" style="right:512.6px;top:1182.97px">303</div>
<div class="t r" style="right:296.3px;top:1182.97px">0.0099</div>
<div class="t r" style="right:80.3px;top:1182.97px">6.7057</div>
<div class="t r" style="right:2851.0px;top:1235.16px;color:#888">15</div>
<div class="t" style="left:137.2px;top:1235.16px">AA<span style="padding:0 0.6px">-</span>1048059</div>
<div class="t r" style="right:1590.3px;top:1235.16px">2</div>
<div class="t r" style="right:1375.5px;top:1235.16px">2,100.7134</div>
<div class="t" style="left:1612.2px;top:1235.16px">2020<span style="padding:0 0.6px">-</span>06<span style="padding:0 0.6px">-</span>23</div>
<div class="t" style="left:1828.2px;top:1235.16px">2021<span style="padding:0 0.6px">-</span>10<span style="padding:0 0.6px">-</span>05</div>
<div class="t r" style="right:727.3px;top:1235.16px">817</div>
<div class="t r" style="right:512.6px;top:1235.16px">469</div>
<div class="t r" style="right:296.3px;top:1235.16px">0.0043</div>
<div class="t r" style="right:80.3px;top:1235.16px">4.4791</div>
<div class="t r" style="right:2851.0px;top:1287.35px;color:#888">16</div>
<div class="t" style="left:137.2px;top:1287.35px">AA<span style="padding:0 0.6px">-</span>1048082</div>
<div class="t r" style="right:1590.3px;top:1287.35px">2</div>
<div class="t r" style="right:1375.5px;top:1287.35px">2,274.4829</div>
<div class="t" style="left:1612.2px;top:1287.35px">2021<span style="padding:0 0.6px">-</span>09<span style="padding:0 0.6px">-</span>06</div>
<div class="t" style="left:1828.2px;top:1287.35px">2021<span style="padding:0 0.6px">-</span>10<span style="padding:0 0.6px">-</span>11</div>
<div class="t r" style="right:727.3px;top:1287.35px">811</div>
<div class="t r" style="right:512.6px;top:1287.35px">35</div>
<div class="t r" style="right:296.3px;top:1287.35px">0.0571</div>
<div class="t r" style="right:80.3px;top:1287.35px">64.9852</div>
<div class="t r" style="right:2851.0px;top:1339.54px;color:#888">17</div>
<div class="t" style="left:137.2px;top:1339.54px">AA<span style="padding:0 0.6px">-</span>10645139</div>
<div class="t r" style="right:1590.3px;top:1339.54px">3</div>
<div class="t r" style="right:1375.5px;top:1339.54px">1,410.705</div>
<div class="t" style="left:1612.2px;top:1339.54px">2020<span style="padding:0 0.6px">-</span>11<span style="padding:0 0.6px">-</span>03</div>
<div class="t" style="left:1828.2px;top:1339.54px">2023<span style="padding:0 0.6px">-</span>04<span style="padding:0 0.6px">-</span>15</div>
<div class="t r" style="right:727.3px;top:1339.54px">260</div>
<div class="t r" style="right:512.6px;top:1339.54px">893</div>
<div class="t r" style="right:296.3px;top:1339.54px">0.0034</div>
<div class="t r" style="right:80.3px;top:1339.54px">1.5797</div>
<div class="t r" style="right:2851.0px;top:1391.73px;color:#888">18</div>
<div class="t" style="left:137.2px;top:1391.73px">AA<span style="padding:0 0.6px">-</span>106451404</div>
<div class="t r" style="right:1590.3px;top:1391.73px">2</div>
<div class="t r" style="right:1375.5px;top:1391.73px">1,389.405</div>
<div class="t" style="left:1612.2px;top:1391.73px">2022<span style="padding:0 0.6px">-</span>07<span style="padding:0 0.6px">-</span>05</div>
<div class="t" style="left:1828.2px;top:1391.73px">2023<span style="padding:0 0.6px">-</span>11<span style="padding:0 0.6px">-</span>06</div>
<div class="t r" style="right:727.3px;top:1391.73px">55</div>
<div class="t r" style="right:512.6px;top:1391.73px">489</div>
<div class="t r" style="right:296.3px;top:1391.73px">0.0041</div>
<div class="t r" style="right:80.3px;top:1391.73px">2.8413</div>
<div class="t r" style="right:2851.0px;top:1443.92px;color:#888">19</div>
<div class="t" style="left:137.2px;top:1443.92px">AA<span style="padding:0 0.6px">-</span>106451406</div>
<div class="t r" style="right:1590.3px;top:1443.92px">2</div>
<div class="t r" style="right:1375.5px;top:1443.92px">1,434.33</div>
<div class="t" style="left:1612.2px;top:1443.92px">2020<span style="padding:0 0.6px">-</span>06<span style="padding:0 0.6px">-</span>21</div>
<div class="t" style="left:1828.2px;top:1443.92px">2020<span style="padding:0 0.6px">-</span>11<span style="padding:0 0.6px">-</span>30</div>
<div class="t r" style="right:727.3px;top:1443.92px">1,126</div>
<div class="t r" style="right:512.6px;top:1443.92px">162</div>
<div class="t r" style="right:296.3px;top:1443.92px">0.0123</div>
<div class="t r" style="right:80.3px;top:1443.92px">8.8539</div>
<div class="t r" style="right:2851.0px;top:1496.11px;color:#888">20</div>
<div class="t" style="left:137.2px;top:1496.11px">AA<span style="padding:0 0.6px">-</span>1064531</div>
<div class="t r" style="right:1590.3px;top:1496.11px">2</div>
<div class="t r" style="right:1375.5px;top:1496.11px">808.4402</div>
<div class="t" style="left:1612.2px;top:1496.11px">2021<span style="padding:0 0.6px">-</span>02<span style="padding:0 0.6px">-</span>20</div>
<div class="t" style="left:1828.2px;top:1496.11px">2022<span style="padding:0 0.6px">-</span>06<span style="padding:0 0.6px">-</span>20</div>
<div class="t r" style="right:727.3px;top:1496.11px">559</div>
<div class="t r" style="right:512.6px;top:1496.11px">485</div>
<div class="t r" style="right:296.3px;top:1496.11px">0.0041</div>
<div class="t r" style="right:80.3px;top:1496.11px">1.6669</div>
</body></html>
